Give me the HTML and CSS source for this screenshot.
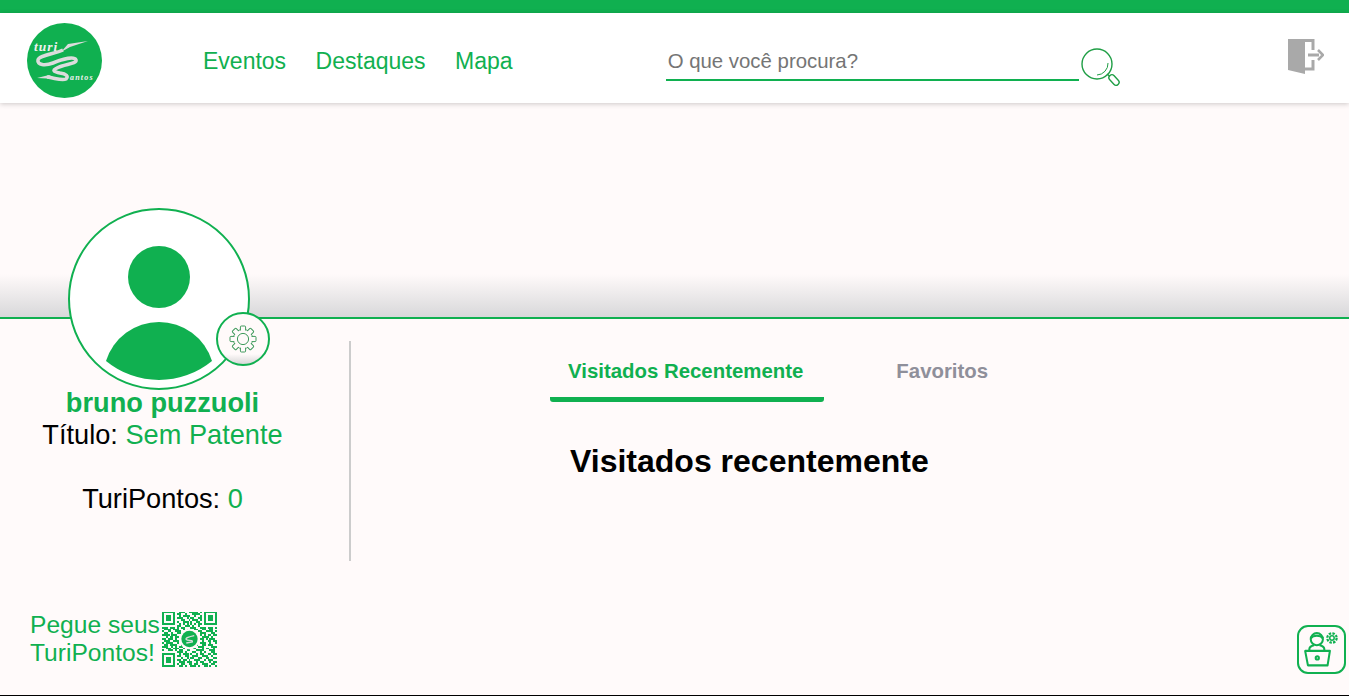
FILE: index.html
```html
<!DOCTYPE html>
<html lang="pt-BR">
<head>
  <meta charset="UTF-8">
  <title>TuriSantos - Perfil</title>
  <link rel="stylesheet" href="styles.css">
</head>
<body>
<div class="page">
  <div class="top-bar"></div>

  <!-- Header -->
  <div class="header">
    <svg class="logo" viewBox="0 0 75 75">
      <circle cx="37.5" cy="37.5" r="37.5" fill="#10b050"/>
      <path d="M36 27 C28 31 12 32 11 37 C10 42 18 43 26 40 C36 36 47 33 49 37 C50 41 38 41 30 45 C24 48 28 49 33 50 C39 51 42 53 39 56 C35 58 28 55 20 54" fill="none" stroke="#dcdcdc" stroke-width="3.6" stroke-linejoin="round"/>
      <path d="M61 18 L41 21 L34 29 L43 24 Z" fill="#dcdcdc"/>
      <path d="M10 55 L22 52 L30 56 Z" fill="#dcdcdc"/>
      <text class="logo-turi" x="7" y="28">turi</text>
      <text class="logo-antos" x="43" y="57">antos</text>
    </svg>

    <div class="nav">
      <a class="nav-link">Eventos</a>
      <a class="nav-link">Destaques</a>
      <a class="nav-link">Mapa</a>
    </div>

    <div class="search">
      <input class="search-input" type="text" placeholder="O que você procura?">
      <svg class="search-icon" viewBox="0 0 40 40" fill="none" stroke="#1f9e45">
        <circle cx="16" cy="16" r="15" stroke-width="1.4"/>
        <path d="M27 15 A11.5 11.5 0 0 1 16 27" stroke-width="1"/>
        <path d="M26 26 L29 28.5" stroke-width="1.4"/>
        <rect x="27" y="29" width="12" height="6" rx="3" transform="rotate(47 33 32)" stroke-width="1.4"/>
      </svg>
    </div>

    <svg class="exit-icon" viewBox="0 0 36 35">
      <path d="M0 0H17V35L0 31Z" fill="#a9a9a9"/>
      <path d="M17 1.5H25V11M25 21V30H17" fill="none" stroke="#a9a9a9" stroke-width="3"/>
      <path d="M20 14.5H31V17.5H20Z" fill="#a9a9a9"/>
      <path d="M30 11 L35 16 L30 21" fill="none" stroke="#a9a9a9" stroke-width="2.6"/>
    </svg>
  </div>

  <div class="banner"></div>

  <div class="content">
    <div class="left-col">
      <div class="profile">
        <div class="avatar">
          <svg class="avatar-img" viewBox="0 0 178 178">
            <circle cx="89" cy="67" r="31" fill="#10b050"/>
            <path d="M36 151 A55.5 55.5 0 0 1 142 151 A83.4 83.4 0 0 1 36 151Z" fill="#10b050"/>
          </svg>
          <div class="gear-btn">
            <svg class="gear-icon" viewBox="0 0 28 28">
              <circle cx="14" cy="14" r="9.6" fill="none" stroke="#3f9a5c"/>
              <g fill="#fffafa" stroke="#3f9a5c">
                <rect x="11.4" y="1" width="5.2" height="7" rx="1"/>
                <rect x="11.4" y="1" width="5.2" height="7" rx="1" transform="rotate(45 14 14)"/>
                <rect x="11.4" y="1" width="5.2" height="7" rx="1" transform="rotate(90 14 14)"/>
                <rect x="11.4" y="1" width="5.2" height="7" rx="1" transform="rotate(135 14 14)"/>
                <rect x="11.4" y="1" width="5.2" height="7" rx="1" transform="rotate(180 14 14)"/>
                <rect x="11.4" y="1" width="5.2" height="7" rx="1" transform="rotate(225 14 14)"/>
                <rect x="11.4" y="1" width="5.2" height="7" rx="1" transform="rotate(270 14 14)"/>
                <rect x="11.4" y="1" width="5.2" height="7" rx="1" transform="rotate(315 14 14)"/>
              </g>
              <circle cx="14" cy="14" r="9.1" fill="#fffafa"/>
              <circle cx="14" cy="14" r="5.6" fill="none" stroke="#3f9a5c"/>
            </svg>
          </div>
        </div>
        <div class="user-name">bruno puzzuoli</div>
        <div class="user-info">Título: <span class="green">Sem Patente</span></div>
        <div class="user-info points">TuriPontos: <span class="green">0</span></div>
      </div>

      <div class="qr-block">
        <div class="qr-text">Pegue seus<br>TuriPontos!</div>
        <svg class="qr" viewBox="0 0 29 29">
          <g fill="none" stroke="#10b050">
            <rect x="0.5" y="0.5" width="6" height="6"/>
            <rect x="22.5" y="0.5" width="6" height="6"/>
            <rect x="0.5" y="22.5" width="6" height="6"/>
          </g>
          <g fill="#10b050">
            <rect x="2" y="2" width="3" height="3"/>
            <rect x="24" y="2" width="3" height="3"/>
            <rect x="2" y="24" width="3" height="3"/>
          </g>
          <path fill="none" stroke="#10b050" d="M9 .5h3M14 .5h5M20 .5h1M8 1.5h2M12 1.5h1M16 1.5h4M9 2.5h1M11 2.5h4M17 2.5h1M20 2.5h1M8 3.5h3M13 3.5h1M15 3.5h2M19 3.5h2M10 4.5h2M14 4.5h1M16 4.5h3M20 4.5h1M8 5.5h1M11 5.5h3M15 5.5h1M18 5.5h2M9 6.5h1M11 6.5h1M13 6.5h1M15 6.5h1M17 6.5h1M19 6.5h2M8 7.5h2M12 7.5h3M16 7.5h1M19 7.5h1M0 8.5h3M4 8.5h3M8 8.5h1M10 8.5h2M15 8.5h3M20 8.5h3M24 8.5h3M28 8.5h1M1 9.5h4M6 9.5h3M11 9.5h1M13 9.5h2M17 9.5h2M21 9.5h2M25 9.5h2M0 10.5h1M3 10.5h2M7 10.5h3M12 10.5h2M16 10.5h1M19 10.5h2M23 10.5h4M28 10.5h1M1 11.5h2M5 11.5h1M8 11.5h2M20 11.5h3M26 11.5h2M0 12.5h4M5 12.5h3M20 12.5h1M22 12.5h1M24 12.5h2M27 12.5h2M2 13.5h1M4 13.5h2M7 13.5h2M21 13.5h4M26 13.5h1M0 14.5h2M3 14.5h3M7 14.5h1M20 14.5h2M23 14.5h1M25 14.5h3M1 15.5h3M6 15.5h3M21 15.5h1M24 15.5h2M27 15.5h2M0 16.5h1M2 16.5h3M5 16.5h1M8 16.5h1M20 16.5h3M25 16.5h1M28 16.5h1M1 17.5h2M4 17.5h4M10 17.5h2M14 17.5h1M17 17.5h2M21 17.5h2M24 17.5h3M0 18.5h3M5 18.5h1M7 18.5h1M9 18.5h2M12 18.5h3M16 18.5h1M19 18.5h3M26 18.5h3M2 19.5h3M6 19.5h3M11 19.5h1M15 19.5h3M21 19.5h1M23 19.5h2M27 19.5h1M0 20.5h1M3 20.5h3M7 20.5h1M9 20.5h2M13 20.5h2M18 20.5h4M25 20.5h3M8 21.5h3M12 21.5h1M16 21.5h2M20 21.5h1M22 21.5h1M26 21.5h2M9 22.5h1M11 22.5h3M15 22.5h1M18 22.5h1M20 22.5h2M24 22.5h2M27 22.5h2M8 23.5h2M12 23.5h2M16 23.5h3M21 23.5h3M26 23.5h1M10 24.5h1M13 24.5h1M15 24.5h2M19 24.5h2M23 24.5h2M27 24.5h2M8 25.5h2M11 25.5h2M14 25.5h1M17 25.5h3M22 25.5h1M24 25.5h3M9 26.5h3M13 26.5h3M18 26.5h1M20 26.5h2M25 26.5h1M27 26.5h2M8 27.5h1M10 27.5h2M14 27.5h2M17 27.5h2M21 27.5h3M26 27.5h2M9 28.5h2M12 28.5h1M15 28.5h3M19 28.5h1M22 28.5h2M25 28.5h1M28 28.5h1"/>
          <circle cx="14.5" cy="14.5" r="5.4" fill="#fffafa"/>
          <circle cx="14.5" cy="14.5" r="4.3" fill="#10b050"/>
          <path d="M17 12.7 C14.5 13.2 12 14 12.8 14.8 C13.6 15.6 16.4 14.8 16 16 L12.8 16.6" fill="none" stroke="#dcdcdc" stroke-width=".7"/>
        </svg>
      </div>
    </div>

    <div class="main">
      <div class="tabs">
        <div class="tab active">Visitados Recentemente</div>
        <div class="tab">Favoritos</div>
      </div>
      <h2 class="section-title">Visitados recentemente</h2>
    </div>
  </div>

  <!-- Help button -->
  <div class="help-btn">
    <svg class="help-icon" viewBox="0 0 46 46" fill="none" stroke="#10b050" stroke-width="2.2" stroke-linejoin="round">
      <circle cx="18" cy="12" r="6.5"/>
      <path d="M11.5 11 C14 7.5 22 7.5 24.5 11"/>
      <path d="M10 24 V22.5 C10 20 13 19 15 18.5 M26 24 V22.5 C26 20 23 19 21 18.5"/>
      <path d="M5.5 24.5 H32 L29.5 40 H8.5 Z"/>
      <circle cx="18.5" cy="32" r="1.7"/>
      <circle cx="34.2" cy="10.7" r="2.4" stroke-width="1.6"/>
      <circle cx="34.2" cy="10.7" r="5" stroke-width="2.4" stroke-dasharray="2.6 1.3"/>
    </svg>
  </div>
</div>
</body>
</html>
```

FILE: styles.css
```css
* {
  box-sizing: border-box;
}

body {
  margin: 0;
  font-family: "Liberation Sans", Arial, sans-serif;
  background-color: #fffafa;
  color: #000;
  overflow: hidden;
}

.page {
  position: relative;
  height: 696px;
  border-bottom: 1px solid #000;
  overflow: hidden;
}

.green {
  color: #10b050;
}

.top-bar {
  height: 13px;
  background-color: #10b050;
}

/* Header */
.header {
  position: relative;
  display: flex;
  align-items: flex-start;
  height: 90px;
  padding: 10px 0 0 27px;
  background-color: white;
  box-shadow: 0 1px 5px rgba(0,0,0,0.2);
}

.logo {
  width: 75px;
  height: 75px;
  flex-shrink: 0;
}

.logo-turi {
  font-family: "Liberation Serif", serif;
  font-style: italic;
  font-weight: bold;
  font-size: 13.5px;
  letter-spacing: 1px;
  fill: #f0f0f0;
}

.logo-antos {
  font-family: "Liberation Serif", serif;
  font-style: italic;
  font-weight: bold;
  font-size: 8px;
  letter-spacing: 1.2px;
  fill: #f0f0f0;
}

.nav {
  display: flex;
  gap: 29.5px;
  margin-left: 101px;
  padding-top: 24px;
}

.nav-link {
  font-size: 23px;
  line-height: 28px;
  color: #10b050;
}

.search {
  display: flex;
  align-items: flex-start;
  margin-left: 153px;
  padding-top: 25px;
}

.search-input {
  width: 413px;
  height: 33px;
  padding: 0 2px 5px;
  border: none;
  border-bottom: 2px solid #10b050;
  background: none;
  outline: none;
  font-family: "Liberation Sans", Arial, sans-serif;
  font-size: 20.4px;
}

.search-input::placeholder {
  color: #757575;
  opacity: 1;
}

.search-icon {
  width: 40px;
  height: 40px;
  margin-left: 2px;
}

.exit-icon {
  width: 36px;
  height: 35px;
  margin: 16px 0 0 167px;
}

/* Banner */
.banner {
  height: 216px;
  border-bottom: 2px solid #10b050;
  background: linear-gradient(to bottom, #fffafa 80%, #d8d8da 100%);
}

/* Content */
.content {
  display: flex;
  align-items: flex-start;
}

.left-col {
  width: 351px;
  flex-shrink: 0;
  margin-top: 22px;
}

.profile {
  display: flow-root;
  height: 220px;
  border-right: 2px solid #ccc;
  text-align: center;
  padding-right: 24px;
}

.avatar {
  position: relative;
  width: 182px;
  height: 182px;
  margin: -133px 0 0 68px;
  border: 2px solid #10b050;
  border-radius: 50%;
  background-color: white;
}

.avatar-img {
  display: block;
  width: 178px;
  height: 178px;
}

.gear-btn {
  position: absolute;
  right: -22px;
  bottom: 22px;
  display: flex;
  align-items: center;
  justify-content: center;
  width: 54px;
  height: 54px;
  padding-bottom: 1px;
  border: 2px solid #10b050;
  border-radius: 50%;
  background: linear-gradient(to bottom, #fffafa 80%, #d8d8d8 100%);
}

.gear-icon {
  width: 28px;
  height: 28px;
}

.user-name {
  margin-top: -1px;
  font-size: 27.2px;
  line-height: 28px;
  font-weight: bold;
  color: #10b050;
}

.user-info {
  margin-top: 2px;
  font-size: 27.2px;
  line-height: 32px;
}

.points {
  margin-top: 32px;
}

.qr-block {
  display: flex;
  align-items: flex-start;
  margin-top: 50px;
  padding-left: 30px;
}

.qr-text {
  width: 132px;
  font-size: 24.6px;
  line-height: 27.5px;
  color: #10b050;
}

.qr {
  width: 55px;
  height: 56px;
  shape-rendering: crispEdges;
}

.qr circle,
.qr path:last-child {
  shape-rendering: auto;
}

/* Main */
.main {
  flex: 1;
  padding: 22px 0 0 199px;
}

.tabs {
  display: flex;
  gap: 54px;
}

.tab {
  height: 61px;
  padding: 19px 21px 0 18px;
  font-size: 20.4px;
  line-height: 23px;
  font-weight: bold;
  color: #8f8f9a;
}

.tab.active {
  color: #10b050;
  border-bottom: 5px solid #10b050;
  border-radius: 3px;
}

.section-title {
  margin: 41px 0 0 20px;
  font-size: 32px;
  line-height: 37px;
  font-weight: bold;
}

/* Help button */
.help-btn {
  position: absolute;
  right: 3px;
  bottom: 21px;
  width: 49px;
  height: 49px;
  padding: 1px;
  border: 2px solid #10b050;
  border-radius: 11px;
}

.help-icon {
  display: block;
  width: 43px;
  height: 43px;
}
```
